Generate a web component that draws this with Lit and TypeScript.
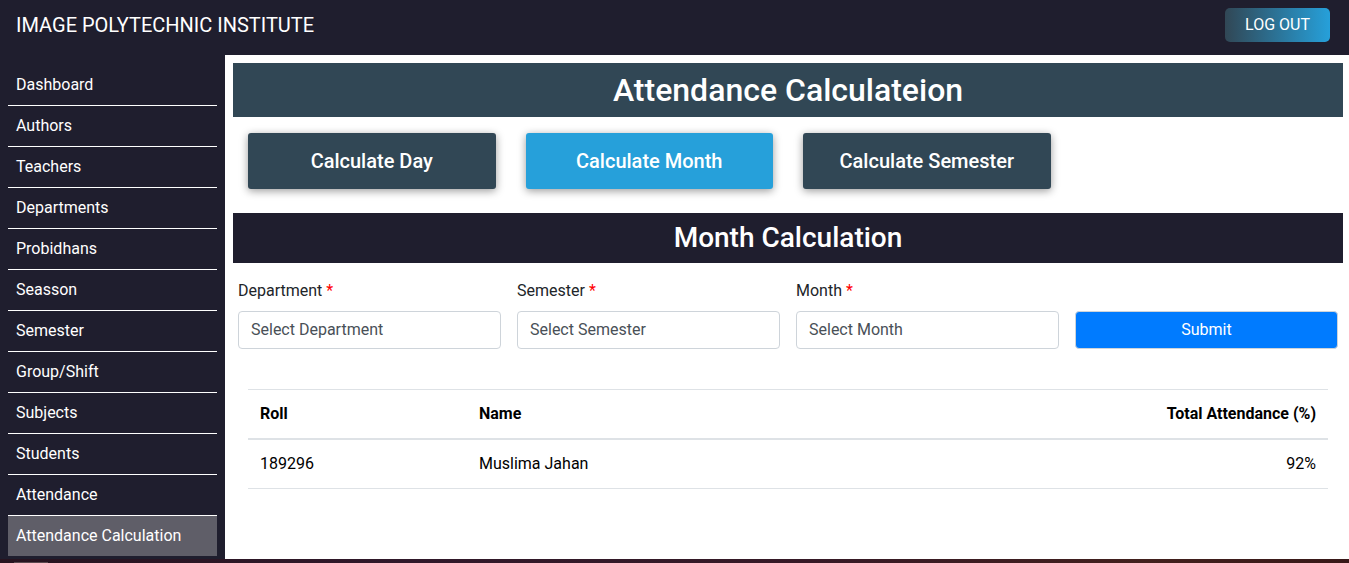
import { LitElement, html, css } from "lit";
import { customElement, state } from "lit/decorators.js";
import { classMap } from "lit/directives/class-map.js";

const MENU = [
  "Dashboard",
  "Authors",
  "Teachers",
  "Departments",
  "Probidhans",
  "Seasson",
  "Semester",
  "Group/Shift",
  "Subjects",
  "Students",
  "Attendance",
  "Attendance Calculation",
];

const MODES = ["Day", "Month", "Semester"];
const FIELDS = ["Department", "Semester", "Month"];
const ROWS = [{ roll: "189296", name: "Muslima Jahan", total: "92%" }];

@customElement("app-root")
export class AppRoot extends LitElement {
  @state() private page = "Attendance Calculation";
  @state() private mode = "Month";

  static styles = css`
    :host {
      display: flex;
      flex-direction: column;
      min-height: 100vh;
      background: #fff;
      color: #212529;
      font: 400 16px/24px Roboto, "Liberation Sans", sans-serif;
    }
    *,
    *::before,
    *::after {
      box-sizing: border-box;
    }
    h1,
    h2 {
      margin: 0;
      padding: 8px;
      color: #fff;
      font-weight: 500;
      text-align: center;
    }
    button,
    select {
      margin: 0;
      font: inherit;
    }
    button {
      cursor: pointer;
    }
    .header {
      display: flex;
      align-items: flex-start;
      justify-content: space-between;
      padding: 8px 19px 13px 16px;
      background: #1f1e2e;
    }
    .brand {
      color: #fff;
      font-size: 20px;
      line-height: 34px;
      text-decoration: none;
    }
    .logout {
      padding: 5px 20px;
      border: 0;
      border-radius: 5px;
      background: linear-gradient(to right, #314755, #26a0da);
      color: #fff;
      line-height: 24px;
    }
    .body {
      display: flex;
      flex: 1;
    }
    .sidebar {
      flex: none;
      width: 225px;
      padding: 10px 8px 3px;
      background: #1f1e2e;
    }
    .menu {
      margin: 0;
      padding: 0;
      list-style: none;
    }
    .item + .item {
      border-top: 1px solid #fff;
    }
    .link {
      display: block;
      padding: 8px;
      color: #fff;
      text-decoration: none;
    }
    .link.active {
      background: #5f5e68;
    }
    .main {
      flex: 1;
      min-width: 0;
      padding: 8px 6px 8px 8px;
    }
    .title {
      background: #314755;
      font-size: 32px;
      line-height: 38px;
    }
    .modes {
      display: grid;
      grid-template-columns: repeat(4, 1fr);
      gap: 30px;
      padding: 16px 15px 24px;
    }
    .mode {
      padding: 16px;
      border: 0;
      border-radius: 3px;
      background: #314755;
      box-shadow: 0 2px 8px rgba(0, 0, 0, 0.4);
      color: #fff;
      font-size: 20px;
      font-weight: 500;
      line-height: 24px;
    }
    .mode.active {
      background: #26a0da;
    }
    .subtitle {
      background: #1f1e2e;
      font-size: 28px;
      line-height: 34px;
    }
    .filters {
      display: grid;
      grid-template-columns: repeat(4, 1fr);
      align-items: end;
      gap: 16px;
      padding: 16px 5px 40px;
    }
    .field {
      display: grid;
      gap: 8px;
    }
    .required {
      color: #f00;
    }
    .control {
      appearance: none;
      width: 100%;
      height: 38px;
      padding: 6px 12px;
      border: 1px solid #ced4da;
      border-radius: 4px;
      background: #fff;
      color: #495057;
      line-height: 24px;
    }
    .submit {
      background: #007bff;
      color: #fff;
    }
    .results {
      padding: 0 15px;
    }
    .table {
      width: 100%;
      border-spacing: 0;
      border-top: 1px solid #dee2e6;
      color: #000;
      text-align: left;
    }
    .table th,
    .table td {
      padding: 12px;
      border-bottom: 1px solid #dee2e6;
    }
    .table th {
      border-bottom-width: 2px;
      font-weight: 700;
    }
    .roll {
      width: 219px;
    }
    .table .total {
      text-align: right;
    }
    .footer {
      display: flex;
      align-items: flex-end;
      height: 4px;
      padding-left: 14px;
      background: linear-gradient(to right, #281420, #30182a 30%, #361926 60%, #42201d 85%, #381818);
    }
    .handle {
      width: 34px;
      height: 1px;
      background: #5c4a50;
    }
  `;

  private openPage(event: Event, page: string) {
    event.preventDefault();
    this.page = page;
  }

  render() {
    return html`
      <header class="header">
        <a class="brand" href="#">IMAGE POLYTECHNIC INSTITUTE</a>
        <button class="logout" type="button">LOG OUT</button>
      </header>
      <div class="body">
        <nav class="sidebar">
          <ul class="menu">
            ${MENU.map(
              (name) => html`<li class="item">
                <a
                  class=${classMap({ link: true, active: name === this.page })}
                  href="#"
                  @click=${(e: Event) => this.openPage(e, name)}
                  >${name}</a
                >
              </li>`
            )}
          </ul>
        </nav>
        <main class="main">
          <h1 class="title">Attendance Calculateion</h1>
          <div class="modes">
            ${MODES.map(
              (mode) => html`<button
                type="button"
                class=${classMap({ mode: true, active: mode === this.mode })}
                @click=${() => (this.mode = mode)}
              >
                Calculate ${mode}
              </button>`
            )}
          </div>
          <h2 class="subtitle">${this.mode} Calculation</h2>
          <form class="filters" @submit=${(e: Event) => e.preventDefault()}>
            ${FIELDS.map(
              (field) => html`<div class="field">
                <label for=${field}>${field} <span class="required">*</span></label>
                <select class="control" id=${field}>
                  <option>Select ${field}</option>
                </select>
              </div>`
            )}
            <button class="control submit" type="submit">Submit</button>
          </form>
          <div class="results">
            <table class="table">
              <thead>
                <tr>
                  <th class="roll" scope="col">Roll</th>
                  <th scope="col">Name</th>
                  <th class="total" scope="col">Total Attendance (%)</th>
                </tr>
              </thead>
              <tbody>
                ${ROWS.map(
                  (row) => html`<tr>
                    <td>${row.roll}</td>
                    <td>${row.name}</td>
                    <td class="total">${row.total}</td>
                  </tr>`
                )}
              </tbody>
            </table>
          </div>
        </main>
      </div>
      <footer class="footer"><div class="handle"></div></footer>
    `;
  }
}
